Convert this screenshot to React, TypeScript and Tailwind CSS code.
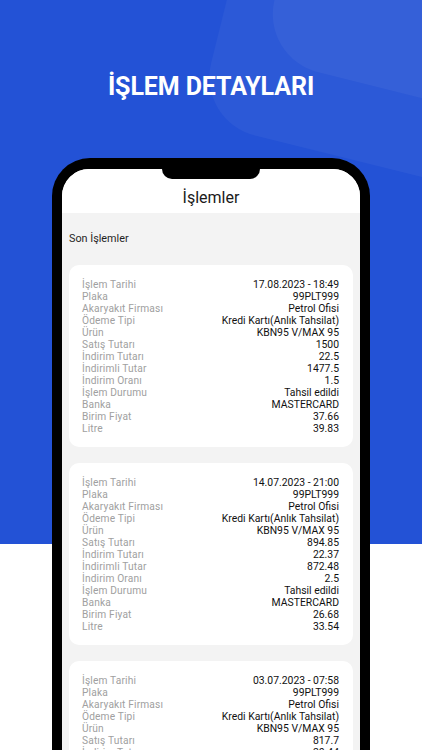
import React from "react";

type Row = [string, string];

const cards: Row[][] = [
  [
    ["İşlem Tarihi", "17.08.2023 - 18:49"],
    ["Plaka", "99PLT999"],
    ["Akaryakıt Firması", "Petrol Ofisi"],
    ["Ödeme Tipi", "Kredi Kartı(Anlık Tahsilat)"],
    ["Ürün", "KBN95 V/MAX 95"],
    ["Satış Tutarı", "1500"],
    ["İndirim Tutarı", "22.5"],
    ["İndirimli Tutar", "1477.5"],
    ["İndirim Oranı", "1.5"],
    ["İşlem Durumu", "Tahsil edildi"],
    ["Banka", "MASTERCARD"],
    ["Birim Fiyat", "37.66"],
    ["Litre", "39.83"],
  ],
  [
    ["İşlem Tarihi", "14.07.2023 - 21:00"],
    ["Plaka", "99PLT999"],
    ["Akaryakıt Firması", "Petrol Ofisi"],
    ["Ödeme Tipi", "Kredi Kartı(Anlık Tahsilat)"],
    ["Ürün", "KBN95 V/MAX 95"],
    ["Satış Tutarı", "894.85"],
    ["İndirim Tutarı", "22.37"],
    ["İndirimli Tutar", "872.48"],
    ["İndirim Oranı", "2.5"],
    ["İşlem Durumu", "Tahsil edildi"],
    ["Banka", "MASTERCARD"],
    ["Birim Fiyat", "26.68"],
    ["Litre", "33.54"],
  ],
  [
    ["İşlem Tarihi", "03.07.2023 - 07:58"],
    ["Plaka", "99PLT999"],
    ["Akaryakıt Firması", "Petrol Ofisi"],
    ["Ödeme Tipi", "Kredi Kartı(Anlık Tahsilat)"],
    ["Ürün", "KBN95 V/MAX 95"],
    ["Satış Tutarı", "817.7"],
    ["İndirim Tutarı", "20.44"],
    ["İndirimli Tutar", "797.26"],
    ["İndirim Oranı", "2.5"],
    ["İşlem Durumu", "Tahsil edildi"],
    ["Banka", "MASTERCARD"],
    ["Birim Fiyat", "26.68"],
    ["Litre", "30.65"],
  ],
];

function Card({ rows }: { rows: Row[] }) {
  return (
    <div className="bg-white rounded-[10px] pt-[14px] pb-[12px] pl-[13px] pr-[14px]">
      {rows.map(([k, v]) => (
        <div key={k} className="flex justify-between items-center h-[12px] leading-[12px]">
          <span className="text-[10.2px] tracking-[0.15px] text-[#a0a0a0]">{k}</span>
          <span className="text-[10.4px] text-[#111111]">{v}</span>
        </div>
      ))}
    </div>
  );
}

export default function App() {
  return (
    <div className="relative w-[422px] h-[750px] overflow-hidden bg-[linear-gradient(to_bottom,#2352d6_0px,#2352d6_544px,#ffffff_544px)]">
      <div className="absolute left-[240px] top-[-232px] w-[340px] h-[400px] rotate-[14deg] rounded-[60px] bg-white/[0.045]" />
      <div className="absolute left-[300px] top-[-268px] w-[320px] h-[370px] rotate-[14deg] rounded-[60px] bg-white/[0.045]" />

      <div className="relative flex flex-col items-center">
        <h1 className="pt-[71px] text-white text-[25px] leading-[32px] font-bold tracking-[-0.1px] [font-family:Roboto,'Noto_Sans',sans-serif]">
          İŞLEM DETAYLARI
        </h1>

        <div className="mt-[55px] w-[318px] h-[640px] bg-black rounded-[38px] pt-[11px] px-[10px]">
          <div className="relative h-full bg-[#f3f3f3] rounded-[27px] overflow-hidden [font-family:Roboto,'Noto_Sans',sans-serif]">
            <div className="absolute left-1/2 -translate-x-1/2 top-0 w-[98px] h-[10px] bg-black rounded-b-[10px]" />
            <div className="h-[44px] bg-white flex justify-center pt-[19px]">
              <span className="text-[16px] leading-[20px] text-[#1a1a1a]">İşlemler</span>
            </div>
            <div className="px-[7px]">
              <div className="pt-[18px] pb-[18px] text-[10.8px] leading-[16px] text-[#1f1f1f]">Son İşlemler</div>
              <div className="flex flex-col gap-[16px]">
                {cards.map((c, i) => (
                  <Card key={i} rows={c} />
                ))}
              </div>
            </div>
          </div>
        </div>
      </div>
    </div>
  );
}
